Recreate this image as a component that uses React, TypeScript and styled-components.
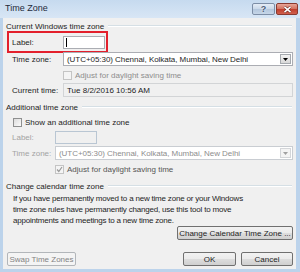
import React from 'react'
import styled, { createGlobalStyle } from 'styled-components'

const GlobalStyle = createGlobalStyle`
  html, body {
    margin: 0;
    padding: 0;
  }
  body {
    font-family: "Liberation Sans", Arial, sans-serif;
    font-size: 8px;
    color: #1e1e1e;
  }
`

const Window = styled.div`
  width: 300px;
  height: 272px;
  display: flex;
  flex-direction: column;
  background: #bcd3eb;
  overflow: hidden;
`

const TitleBar = styled.div`
  height: 18px;
  display: flex;
  align-items: flex-start;
  padding: 0 2px 0 5px;
  background: linear-gradient(#c6daef, #d8e6f5);
`

const Title = styled.span`
  font-size: 9px;
  line-height: 17px;
  color: #1e2a3a;
`

const CaptionButtons = styled.div`
  margin-left: auto;
  margin-top: 3px;
  display: flex;
  gap: 1px;
`

const CaptionButton = styled.div<{ $close?: boolean }>`
  width: ${p => (p.$close ? 22 : 23)}px;
  height: 12px;
  box-sizing: border-box;
  border-radius: 2px;
  display: flex;
  align-items: center;
  justify-content: center;
  border: 1px solid ${p => (p.$close ? '#8a3a30' : '#7d8ea6')};
  background: ${p =>
    p.$close
      ? 'linear-gradient(#e8a597 0%, #d57563 45%, #c1402f 55%, #d0604d 100%)'
      : 'linear-gradient(#e4ecf6 0%, #ccdaea 45%, #b5c8de 55%, #c6d6e8 100%)'};
  font-size: 9px;
  font-weight: bold;
  color: #4b5d78;
  text-shadow: 0 0 2px #fff;
`

const Body = styled.div`
  flex: 1;
  margin: 0 4px 3px 3px;
  background: #f0f0f0;
  display: flex;
  flex-direction: column;
`

const GroupHeader = styled.div<{ $mt: number }>`
  height: 12px;
  margin-top: ${p => p.$mt}px;
  padding: 0 4px 0 3px;
  display: flex;
  align-items: center;
  white-space: nowrap;

  &::after {
    content: '';
    flex: 1;
    margin-left: 4px;
    border-top: 1px solid #d5dfe5;
    border-bottom: 1px solid #ffffff;
  }
`

const Highlight = styled.div`
  width: 101px;
  height: 22px;
  box-sizing: border-box;
  margin: -1px 0 0 4px;
  padding-left: 3px;
  border: 2px solid #e3202c;
  display: flex;
  align-items: center;
`

const Row = styled.div<{ $mt: number; $h?: number; $indent?: number }>`
  height: ${p => p.$h ?? 14}px;
  margin-top: ${p => p.$mt}px;
  padding-left: ${p => p.$indent ?? 9}px;
  padding-right: 3px;
  display: flex;
  align-items: center;
  white-space: nowrap;
`

const FieldLabel = styled.span<{ $w: number; $disabled?: boolean }>`
  width: ${p => p.$w}px;
  flex: none;
  color: ${p => (p.$disabled ? '#a3a3a3' : '#1e1e1e')};
`

const TextInput = styled.div<{ $disabled?: boolean }>`
  width: 42px;
  height: 13px;
  box-sizing: border-box;
  border: 1px solid ${p => (p.$disabled ? '#b9c6d3' : '#abadb3')};
  background: ${p => (p.$disabled ? '#f0f0f0' : '#ffffff')};
  display: flex;
  align-items: center;
  padding-left: 2px;
`

const Caret = styled.span`
  width: 1px;
  height: 9px;
  background: #000;
`

const SelectBox = styled.div<{ $disabled?: boolean }>`
  flex: 1;
  height: 14px;
  box-sizing: border-box;
  border: 1px solid ${p => (p.$disabled ? '#c9cdd2' : '#abadb3')};
  background: #ffffff;
  display: flex;
  align-items: center;
  padding: 0 1px 0 3px;
  color: ${p => (p.$disabled ? '#8d8d8d' : '#1e1e1e')};
`

const SelectText = styled.span`
  flex: 1;
  letter-spacing: -0.05px;
`

const DropButton = styled.div<{ $disabled?: boolean }>`
  width: 11px;
  height: 10px;
  box-sizing: border-box;
  border: 1px solid ${p => (p.$disabled ? '#d4d6d9' : '#a5a9ae')};
  background: ${p => (p.$disabled ? '#f4f4f4' : 'linear-gradient(#f2f2f2, #d8d8d8)')};
  display: flex;
  align-items: center;
  justify-content: center;
`

const ReadOnlyField = styled.div`
  flex: 1;
  height: 14px;
  box-sizing: border-box;
  border: 1px solid #d2d4d6;
  background: #f0f0f0;
  display: flex;
  align-items: center;
  padding-left: 3px;
`

const CheckBox = styled.div<{ $disabled?: boolean }>`
  width: 9px;
  height: 9px;
  box-sizing: border-box;
  flex: none;
  border: 1px solid ${p => (p.$disabled ? '#c4c4c4' : '#8e8f8f')};
  background: ${p => (p.$disabled ? '#f4f4f4' : 'linear-gradient(135deg, #dcdcdc, #fbfbfb)')};
  margin-right: 3px;
  display: flex;
  align-items: center;
  justify-content: center;
`

const CheckText = styled.span<{ $tone?: 'disabled' | 'muted' }>`
  color: ${p => (p.$tone === 'disabled' ? '#8d8d8d' : p.$tone === 'muted' ? '#555555' : '#1e1e1e')};
`

const Paragraph = styled.p`
  margin: 1px 0 0;
  padding: 0 8px 0 10px;
  line-height: 11px;
  letter-spacing: -0.2px;
  white-space: nowrap;
`

const Button = styled.div<{ $w: number; $disabled?: boolean }>`
  width: ${p => p.$w}px;
  height: 14px;
  box-sizing: border-box;
  border: 1px solid ${p => (p.$disabled ? '#b2b6ba' : '#707070')};
  border-radius: 2px;
  background: ${p =>
    p.$disabled
      ? '#f4f4f4'
      : 'linear-gradient(#f2f2f2 0%, #ebebeb 48%, #dddddd 52%, #cfcfcf 100%)'};
  color: ${p => (p.$disabled ? '#838383' : '#1e1e1e')};
  display: flex;
  align-items: center;
  justify-content: center;
  white-space: nowrap;
`

const ChangeRow = styled.div`
  display: flex;
  justify-content: flex-end;
  padding-right: 3px;
`

const ButtonBar = styled.div`
  margin-top: 12px;
  display: flex;
  justify-content: space-between;
  padding: 0 3px 0 4px;
`

const ButtonGroup = styled.div`
  display: flex;
  gap: 5px;
`

const Arrow: React.FC<{ color: string }> = ({ color }) => (
  <svg width="5" height="3" viewBox="0 0 5 3">
    <path d="M0 0h5L2.5 3z" fill={color} />
  </svg>
)

const Tick = () => (
  <svg width="7" height="7" viewBox="0 0 7 7">
    <path d="M1 3.5l1.8 2L6 1" stroke="#9a9a9a" strokeWidth="1.2" fill="none" />
  </svg>
)

const CloseGlyph = () => (
  <svg width="9" height="7" viewBox="0 0 9 7">
    <path d="M1.5 0.8l6 5.4M7.5 0.8l-6 5.4" stroke="#5a1a12" strokeWidth="2.6" />
    <path d="M1.5 0.8l6 5.4M7.5 0.8l-6 5.4" stroke="#ffffff" strokeWidth="1.6" />
  </svg>
)

export default function App() {
  return (
    <>
      <GlobalStyle />
      <Window>
        <TitleBar>
          <Title>Time Zone</Title>
          <CaptionButtons>
            <CaptionButton>?</CaptionButton>
            <CaptionButton $close>
              <CloseGlyph />
            </CaptionButton>
          </CaptionButtons>
        </TitleBar>
        <Body>
          <GroupHeader $mt={2}>Current Windows time zone</GroupHeader>
          <Highlight>
            <FieldLabel $w={51}>Label:</FieldLabel>
            <TextInput>
              <Caret />
            </TextInput>
          </Highlight>
          <Row $mt={-1}>
            <FieldLabel $w={51}>Time zone:</FieldLabel>
            <SelectBox>
              <SelectText>(UTC+05:30) Chennai, Kolkata, Mumbai, New Delhi</SelectText>
              <DropButton>
                <Arrow color="#000" />
              </DropButton>
            </SelectBox>
          </Row>
          <Row $mt={3} $h={12} $indent={60}>
            <CheckBox $disabled />
            <CheckText $tone="disabled">Adjust for daylight saving time</CheckText>
          </Row>
          <Row $mt={2}>
            <FieldLabel $w={51}>Current time:</FieldLabel>
            <ReadOnlyField>Tue 8/2/2016 10:56 AM</ReadOnlyField>
          </Row>

          <GroupHeader $mt={4}>Additional time zone</GroupHeader>
          <Row $mt={3} $h={12} $indent={10}>
            <CheckBox />
            <CheckText>Show an additional time zone</CheckText>
          </Row>
          <Row $mt={2}>
            <FieldLabel $w={43} $disabled>Label:</FieldLabel>
            <TextInput $disabled />
          </Row>
          <Row $mt={2}>
            <FieldLabel $w={43} $disabled>Time zone:</FieldLabel>
            <SelectBox $disabled>
              <SelectText>(UTC+05:30) Chennai, Kolkata, Mumbai, New Delhi</SelectText>
              <DropButton $disabled>
                <Arrow color="#a0a0a0" />
              </DropButton>
            </SelectBox>
          </Row>
          <Row $mt={3} $h={12} $indent={52}>
            <CheckBox $disabled>
              <Tick />
            </CheckBox>
            <CheckText $tone="muted">Adjust for daylight saving time</CheckText>
          </Row>

          <GroupHeader $mt={5}>Change calendar time zone</GroupHeader>
          <Paragraph>
            If you have permanently moved to a new time zone or your Windows
            <br />
            time zone rules have permanently changed, use this tool to move
            <br />
            appointments and meetings to a new time zone.
          </Paragraph>
          <ChangeRow>
            <Button $w={116}>Change Calendar Time Zone ...</Button>
          </ChangeRow>

          <ButtonBar>
            <Button $w={69} $disabled>
              Swap Time Zones
            </Button>
            <ButtonGroup>
              <Button $w={53}>OK</Button>
              <Button $w={52}>Cancel</Button>
            </ButtonGroup>
          </ButtonBar>
        </Body>
      </Window>
    </>
  )
}
